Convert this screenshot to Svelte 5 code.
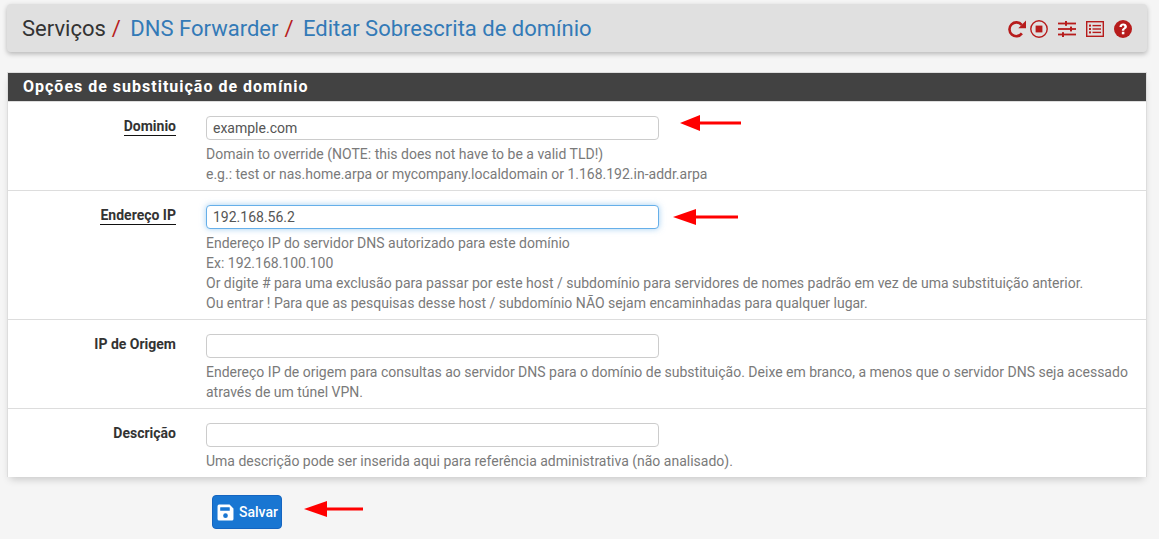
<script>
  const rows = [
    { label: 'Dominio', underline: true, value: 'example.com', help: ['Domain to override (NOTE: this does not have to be a valid TLD!)', 'e.g.: test or nas.home.arpa or mycompany.localdomain or 1.168.192.in-addr.arpa'] },
    { label: 'Endereço IP', underline: true, value: '192.168.56.2', focus: true, help: ['Endereço IP do servidor DNS autorizado para este domínio', 'Ex: 192.168.100.100', 'Or digite # para uma exclusão para passar por este host / subdomínio para servidores de nomes padrão em vez de uma substituição anterior.', 'Ou entrar ! Para que as pesquisas desse host / subdomínio NÃO sejam encaminhadas para qualquer lugar.'] },
    { label: 'IP de Origem', value: '', help: ['Endereço IP de origem para consultas ao servidor DNS para o domínio de substituição. Deixe em branco, a menos que o servidor DNS seja acessado através de um túnel VPN.'] },
    { label: 'Descrição', value: '', help: ['Uma descrição pode ser inserida aqui para referência administrativa (não analisado).'] }
  ];
</script>

<div class="page">
  <header class="crumbs">
    <h1>
      <span class="plain">Serviços</span><span class="sep">/</span>
      <a href="#dns">DNS Forwarder</a><span class="sep">/</span>
      <a href="#edit">Editar Sobrescrita de domínio</a>
    </h1>
    <div class="icons">
      <svg class="reload" width="18" height="18" viewBox="0 0 18 18" fill="none" stroke="#b71c1c" stroke-width="2.6"><path d="M13.9 13.4A6.9 6.9 0 1 1 13.7 4.9"/><path d="M18 0.5V8.2H10.3Z" fill="#b71c1c" stroke="none"/></svg>
      <svg width="18" height="18" viewBox="0 0 18 18" fill="none"><circle cx="9" cy="9" r="8.2" stroke="#b71c1c" stroke-width="1.4"/><rect x="5.6" y="5.6" width="6.8" height="6.8" fill="#b71c1c"/></svg>
      <svg width="18" height="18" viewBox="0 0 18 18" fill="#b71c1c"><rect y="2.6" width="18" height="1.8"/><rect y="8.1" width="18" height="1.8"/><rect y="13.6" width="18" height="1.8"/><rect x="7" y="1" width="2" height="4.8"/><rect x="12" y="6.6" width="2" height="4.8"/><rect x="4" y="12.2" width="2" height="4.8"/></svg>
      <svg width="18" height="16" viewBox="0 0 18 16" fill="none"><rect x="0.7" y="0.7" width="16.6" height="14.6" stroke="#b71c1c" stroke-width="1.4"/><g fill="#b71c1c"><rect x="3" y="3.6" width="2" height="2"/><rect x="3" y="7" width="2" height="2"/><rect x="3" y="10.4" width="2" height="2"/><rect x="6.5" y="3.9" width="8.5" height="1.4"/><rect x="6.5" y="7.3" width="8.5" height="1.4"/><rect x="6.5" y="10.7" width="8.5" height="1.4"/></g></svg>
      <svg width="18" height="18" viewBox="0 0 17 17"><circle cx="8.5" cy="8.5" r="8.5" fill="#b71c1c"/><path d="M5.1 6.5C5.2 4.4 6.7 3.2 8.7 3.2C10.6 3.2 12.2 4.4 12.2 6.2C12.2 8.5 9.7 8.4 9.7 10.2H7.4C7.4 7.5 9.8 7.6 9.8 6.3C9.8 5.7 9.4 5.3 8.6 5.3C7.9 5.3 7.5 5.8 7.4 6.5Z" fill="#fff"/><rect x="7.4" y="11.1" width="2.4" height="2.4" fill="#fff"/></svg>
    </div>
  </header>

  <section class="panel">
    <h2>Opções de substituição de domínio</h2>
    {#each rows as row}
      <div class="row">
        <div class="label"><span class:under={row.underline}>{row.label}</span></div>
        <div class="field">
          <input type="text" value={row.value} class:focus={row.focus} />
          <div class="help">
            {#each row.help as line}
              <div>{line}</div>
            {/each}
          </div>
        </div>
      </div>
    {/each}
  </section>

  <div class="actions">
    <button type="button">
      <svg width="17" height="17" viewBox="0 0 16 16"><path d="M2 0.5H11.8L15.5 4.2V14A1.5 1.5 0 0 1 14 15.5H2A1.5 1.5 0 0 1 0.5 14V2A1.5 1.5 0 0 1 2 0.5Z" fill="#fff"/><rect x="3" y="3" width="9" height="3.4" rx="0.4" fill="#1976d2"/><circle cx="8" cy="11" r="2.2" fill="#1976d2"/></svg>
      <span>Salvar</span>
    </button>
  </div>

  <svg class="arrow a1" width="62" height="16" viewBox="0 0 62 16"><path d="M0 8L20 0V6.5H61V9.5H20V16Z" fill="#f00"/></svg>
  <svg class="arrow a2" width="66" height="16" viewBox="0 0 66 16"><path d="M0 8L23 0V6.5H65V9.5H23V16Z" fill="#f00"/></svg>
  <svg class="arrow a3" width="60" height="16" viewBox="0 0 60 16"><path d="M0 8L23 0V6.5H59V9.5H23V16Z" fill="#f00"/></svg>
</div>

<style>
  :global(body) { margin: 0; background: #f5f5f5; }
  .page {
    position: relative;
    width: 1159px;
    height: 539px;
    box-sizing: border-box;
    padding: 4px 12px 0 7px;
    overflow: hidden;
    font-family: Roboto, "Liberation Sans", sans-serif;
    color: #424242;
  }
  .crumbs {
    height: 48px;
    background: #e0e0e0;
    border-radius: 4px;
    box-shadow: 0 2px 5px rgba(0, 0, 0, 0.26);
    display: flex;
    align-items: center;
    justify-content: space-between;
    padding: 0 15px;
  }
  h1 {
    margin: 2px 0 0;
    font-size: 22px;
    font-weight: 400;
    line-height: 24px;
    white-space: nowrap;
  }
  .plain { color: #333; }
  .sep { color: #b71c1c; margin-left: 6px; margin-right: 4px; }
  a { color: #337ab7; text-decoration: none; }
  .icons { display: flex; align-items: center; gap: 10px; margin-top: 1px; }
  .reload { margin-right: -6px; }
  .panel {
    margin: 20px 0 0 0;
    background: #fff;
    border: 1px solid #ddd;
    border-bottom: 0;
    box-shadow: 0 5px 8px -3px rgba(0, 0, 0, 0.2);
  }
  h2 {
    margin: 0;
    height: 28px;
    line-height: 28px;
    background: #424242;
    color: #fff;
    font-size: 16px;
    font-weight: 700;
    letter-spacing: 1px;
    padding-left: 15px;
  }
  .row {
    display: grid;
    grid-template-columns: 168px 1fr;
    column-gap: 30px;
    padding: 14px 15px 6px 0;
    border-top: 1px solid #ddd;
    font-size: 14px;
  }
  .label {
    text-align: right;
    font-weight: 700;
    font-size: 14px;
    line-height: 20px;
    color: #333;
  }
  .under { border-bottom: 1px solid #111; display: inline-block; line-height: 17px; margin-top: 1px; }
  input {
    display: block;
    box-sizing: border-box;
    width: 453px;
    height: 24px;
    padding: 0 6px;
    border: 1px solid #ccc;
    border-radius: 4px;
    font: 14px Roboto, sans-serif;
    color: #555;
    background: #fff;
    outline: 0;
  }
  input.focus {
    border-color: #66afe9;
    box-shadow: 0 0 6px rgba(102, 175, 233, 0.6);
  }
  .help {
    margin-top: 4px;
    font-size: 14px;
    line-height: 20px;
    color: #7a7a7a;
    width: 925px;
  }
  .actions { padding: 18px 0 0 205px; }
  button {
    display: flex;
    align-items: center;
    gap: 5px;
    width: 70px;
    height: 34px;
    padding: 0 4px;
    box-sizing: border-box;
    background: #1976d2;
    border: 1px solid #1565c0;
    border-radius: 4px;
    color: #fff;
    font: 500 14px Roboto, sans-serif;
  }
  button svg { flex-shrink: 0; }
  .arrow { position: absolute; }
  .a1 { left: 680px; top: 115px; }
  .a2 { left: 673px; top: 209px; }
  .a3 { left: 304px; top: 501px; }
</style>
